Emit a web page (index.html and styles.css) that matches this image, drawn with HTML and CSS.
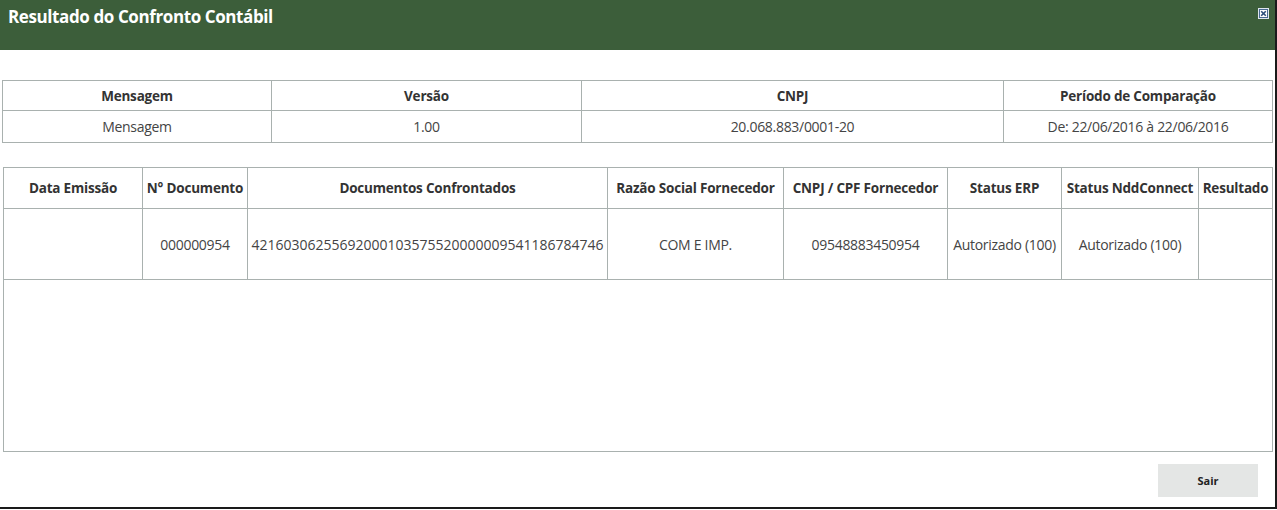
FILE: index.html
```html
<!DOCTYPE html>
<html lang="pt">
<head>
<meta charset="utf-8">
<link rel="stylesheet" href="styles.css">
</head>
<body>
<div class="dialog">
  <div class="titlebar">
    <span class="title">Resultado do Confronto Contábil</span>
    <span class="close"><svg width="11" height="11" viewBox="0 0 11 11"><rect x="0.5" y="0.5" width="10" height="10" fill="#fff" stroke="#dfe6ee"/><rect x="1.5" y="1.5" width="8" height="8" fill="none" stroke="#4a6a90" stroke-width="1"/><path d="M3.2 3.2 L7.8 7.8 M7.8 3.2 L3.2 7.8" stroke="#2d4f7a" stroke-width="1.6"/></svg></span>
  </div>
  <div class="content">
    <table class="info">
      <colgroup><col style="width:269px"><col style="width:310px"><col style="width:422px"><col></colgroup>
      <tr><th>Mensagem</th><th>Versão</th><th>CNPJ</th><th>Período de Comparação</th></tr>
      <tr><td>Mensagem</td><td>1.00</td><td>20.068.883/0001-20</td><td>De: 22/06/2016 à 22/06/2016</td></tr>
    </table>
    <div class="grid">
      <table class="docs">
        <colgroup><col style="width:139px"><col style="width:105px"><col style="width:360px"><col style="width:176px"><col style="width:164px"><col style="width:114px"><col style="width:137px"><col></colgroup>
        <tr><th>Data Emissão</th><th>N° Documento</th><th>Documentos Confrontados</th><th>Razão Social Fornecedor</th><th>CNPJ / CPF Fornecedor</th><th>Status ERP</th><th>Status NddConnect</th><th>Resultado</th></tr>
        <tr><td></td><td>000000954</td><td class="key">42160306255692000103575520000009541186784746</td><td>COM E IMP.</td><td>09548883450954</td><td>Autorizado (100)</td><td>Autorizado (100)</td><td></td></tr>
      </table>
    </div>
    <div class="actions"><button class="btn">Sair</button></div>
  </div>
</div>
</body>
</html>
```
FILE: styles.css
```css
html, body { margin: 0; padding: 0; background: #fff; }
body { font-family: "Open Sans", "Noto Sans", sans-serif; color: #3a3a3a; }
.dialog {
  width: 1275px;
  height: 507px;
  border-right: 2px solid #1a1a1a;
  border-bottom: 2px solid #1a1a1a;
  display: flex;
  flex-direction: column;
}
.titlebar {
  height: 50px;
  background: #3c5e3a;
  display: flex;
  justify-content: space-between;
  align-items: flex-start;
  padding: 0 6px 0 8px;
  box-sizing: border-box;
}
.title {
  color: #fff;
  font-weight: 700;
  font-size: 17px;
  letter-spacing: -0.4px;
  line-height: 20px;
  margin-top: 7px;
}
.close { margin-top: 8px; display: block; height: 11px; }
.close svg { display: block; }
.content { flex: 1; display: flex; flex-direction: column; padding: 30px 2px 0 2px; }
table { border-collapse: collapse; table-layout: fixed; font-size: 14px; letter-spacing: -0.3px; }
th, td { border: 1px solid #a9b1af; text-align: center; padding: 0; white-space: nowrap; overflow: hidden; }
th { font-weight: 700; color: #333; font-size: 13.5px; letter-spacing: -0.2px; }
td { color: #444; }
.info { width: 1271px; }
.info th { height: 29px; }
.info td { height: 31px; }
.grid {
  margin-top: 24px;
  margin-left: 1px;
  width: 1268px;
  height: 284px;
  border: 1px solid #a9b1af;
  border-top: none;
}
.docs { width: 1270px; margin: 0 -1px; }
.docs tr:first-child th { border-top: 1px solid #a9b1af; }
.docs th { height: 40px; }
.docs td { height: 70px; }
.docs td.key { letter-spacing: 0; }
.actions { display: flex; justify-content: flex-end; padding: 12px 15px 0 0; }
.btn {
  width: 100px;
  height: 33px;
  background: #e4e6e5;
  border: none;
  font-family: "Open Sans", sans-serif;
  font-weight: 700;
  font-size: 11px;
  color: #222;
  padding: 0;
}
```
